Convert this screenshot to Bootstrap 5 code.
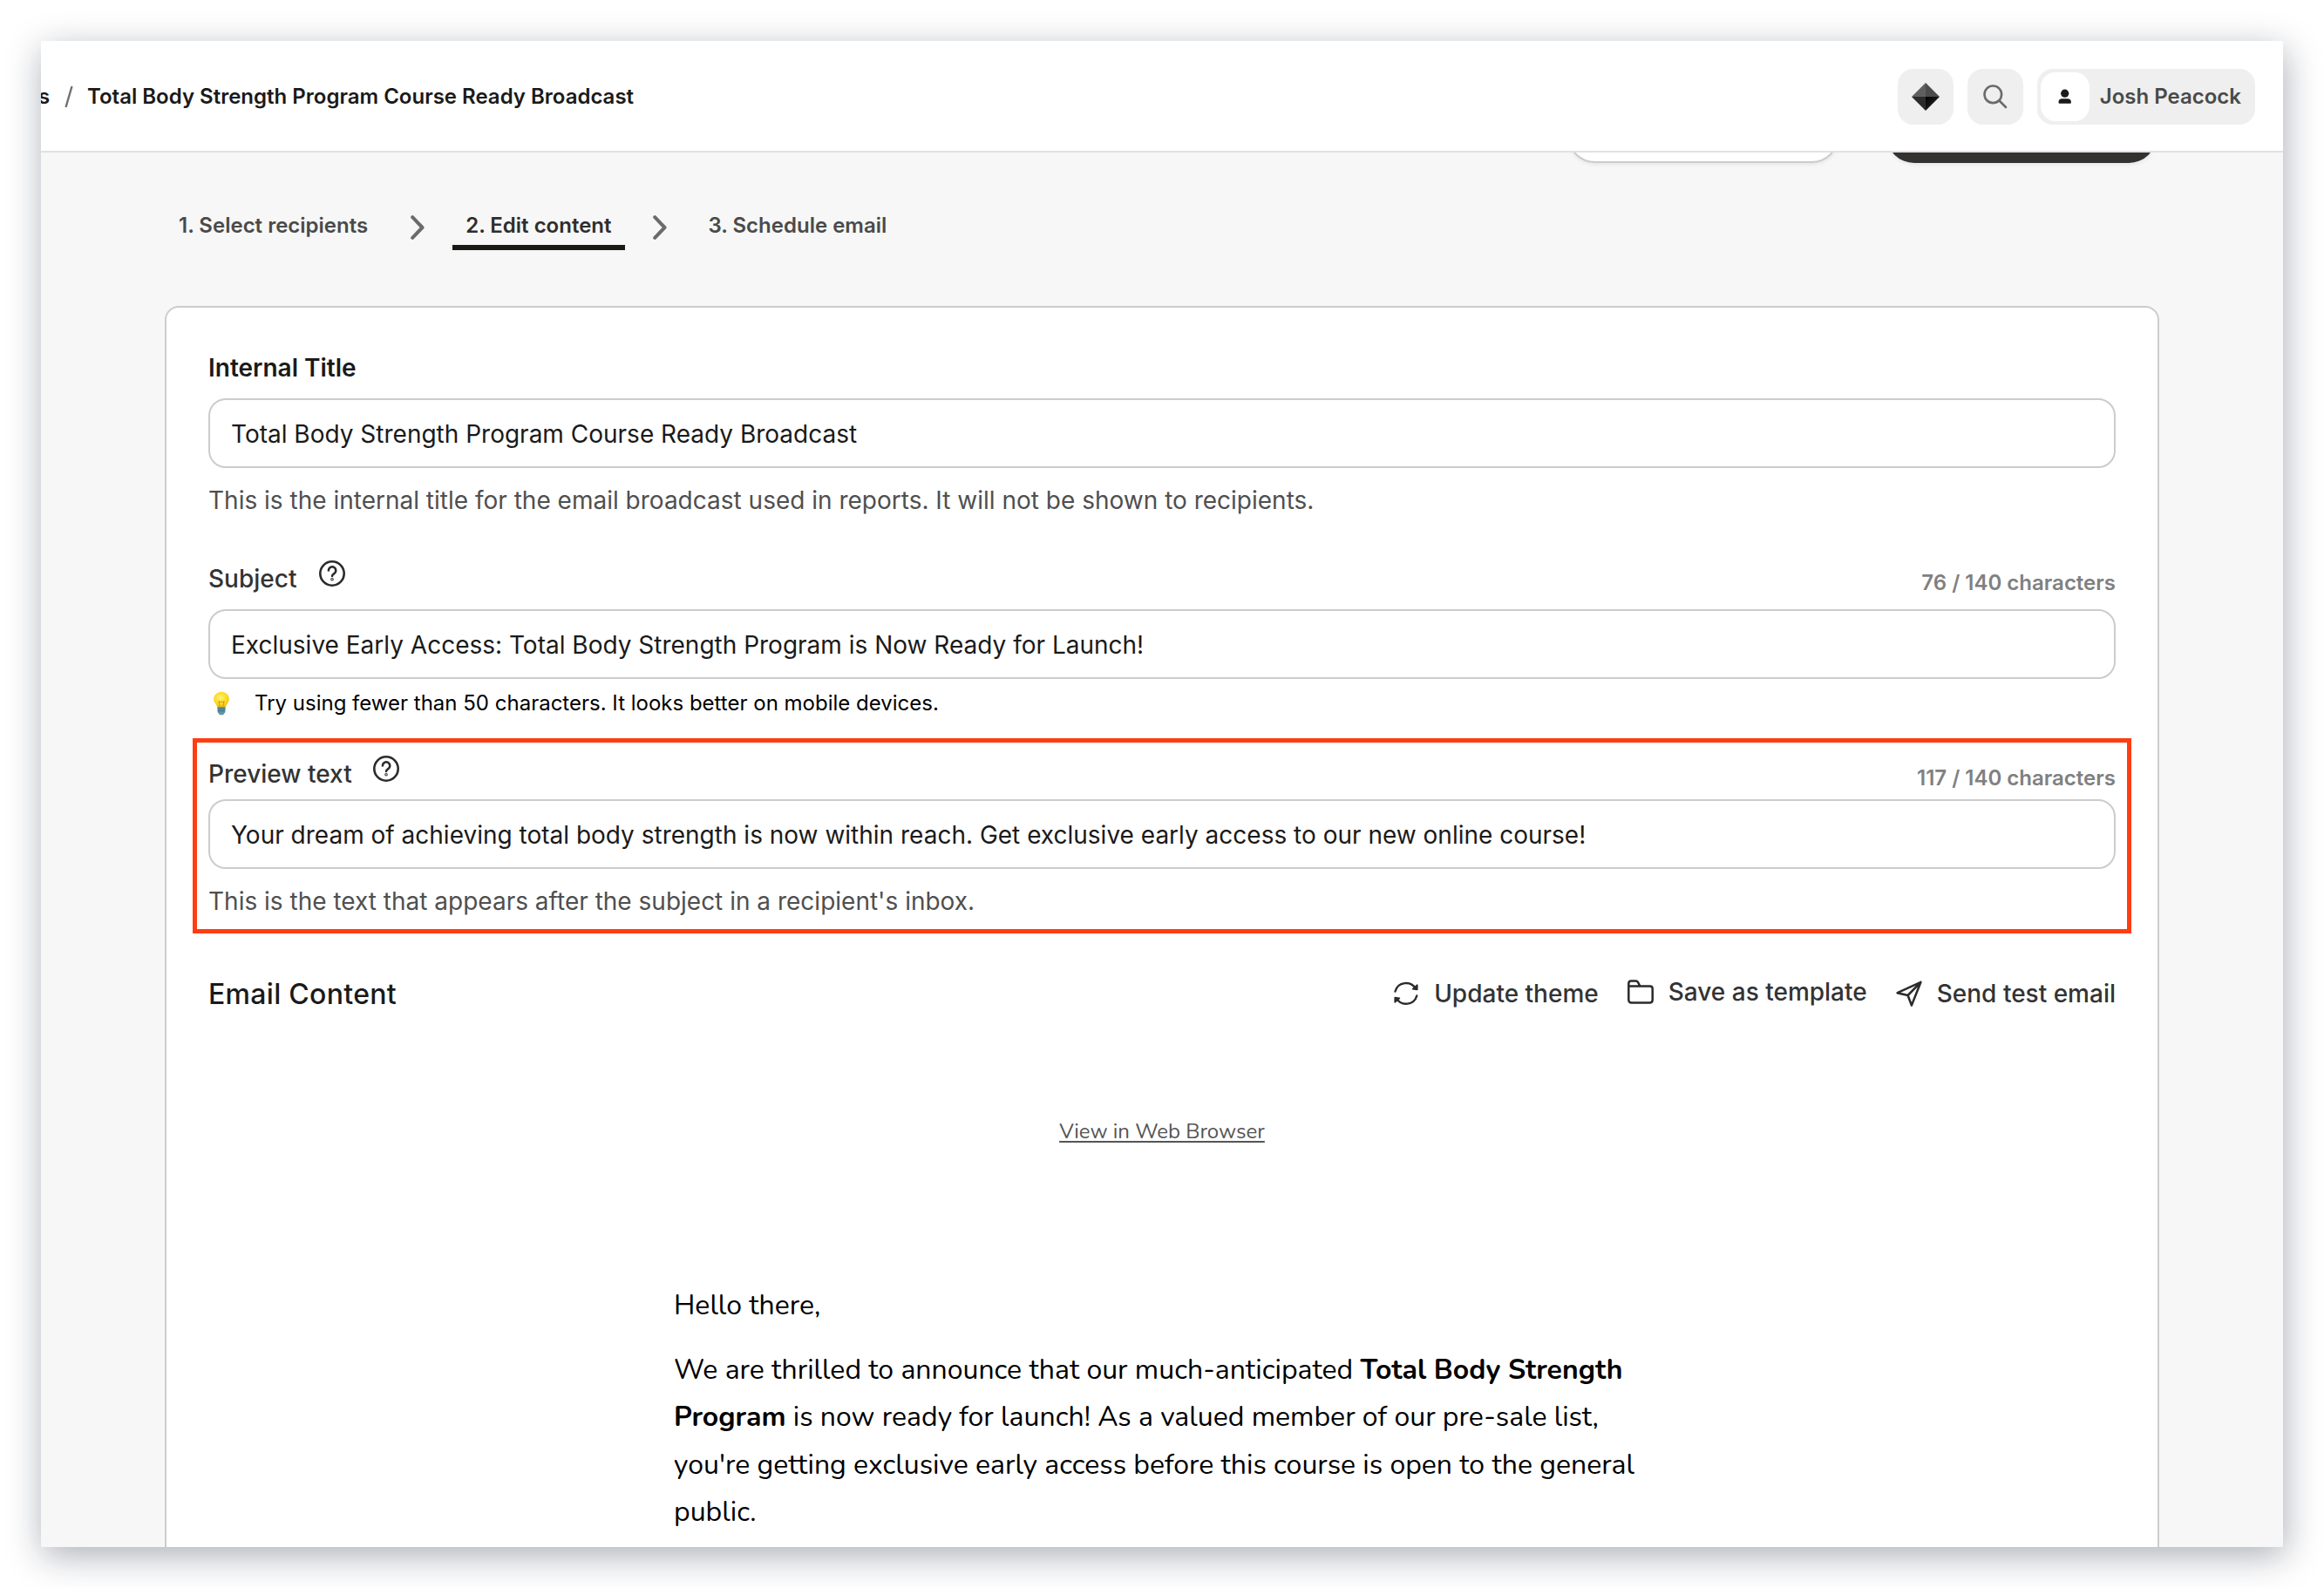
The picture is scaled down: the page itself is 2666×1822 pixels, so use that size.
<!DOCTYPE html>
<html lang="en">
<head>
<meta charset="utf-8">
<meta name="viewport" content="width=device-width, initial-scale=1">
<title>Total Body Strength Program Course Ready Broadcast</title>
<link rel="stylesheet" href="https://cdn.jsdelivr.net/npm/bootstrap@5.3.0/dist/css/bootstrap.min.css">
<script src="https://cdn.jsdelivr.net/npm/bootstrap@5.3.0/dist/js/bootstrap.bundle.min.js"></script>
<style>
body{background:#fff;font-family:Inter,"Liberation Sans",sans-serif;font-size:28px;line-height:40px;color:#1a1a1a;height:1822px;overflow:hidden;padding:47px}
svg{display:block;flex:none}
.app-window{height:1728px;background:#f7f7f7;border-radius:2px;box-shadow:2px 10px 40px rgba(10,20,40,.34)}
.app-clip{height:100%;overflow:hidden;border-radius:2px}
/* top bar */
.topbar{height:128px;padding:2px 32px 0 0;background:#fff;border-bottom:2px solid #e1e1e1;z-index:2;font-size:24px;font-weight:600}
.crumb-prev{margin-left:-3px;width:14px}
.crumb-sep{margin:0 16px 0 16px}
.tile{width:64px;height:64px;border-radius:18px;background:#efefef}
.user-chip{height:64px;padding:4px 16px 4px 4px;border-radius:18px;background:#efefef;color:#4a4a4a}
.avatar{width:56px;height:56px;border-radius:17px;background:#fff;margin-right:12px}
/* page actions, scrolled under the top bar */
.actions{margin-top:-52px;padding-right:145px;gap:54px}
.pill{width:310px;height:64px;border-radius:32px;box-shadow:0 2px 4px rgba(0,0,0,.07)}
.pill-light{width:312px;background:#fff;border:2px solid #ccc}
.pill-dark{background:#333230}
/* wizard steps */
.steps{margin:56px 0 64px 142px;height:44px;font-size:24px;font-weight:600;line-height:32px;color:#4a4a4a}
.step{padding:0 16px;height:44px;white-space:nowrap}
.step.current{padding:0 15px;color:#2e2e2e;border-bottom:6px solid #1a1a17}
.step-arrow{margin:4px 32px 0 33px}
.current + .step-arrow{margin-left:32px}
/* editor card */
.editor{margin:0 142px;height:1500px;padding:49px 48px 48px;background:#fff;border:2px solid #ccc;border-radius:16px}
.field-title{font-weight:600;line-height:40px;margin-bottom:15px}
.field{height:80px;padding:2px 24px 0;background:#fff;border:2px solid #ccc;border-radius:20px;font-size:28px;color:#1a1a1a}
.field:focus{box-shadow:none}
.help{margin-top:17px;color:#4f4f4f}
.label-row{padding-top:8.5px}
.label-row .name{font-weight:500;color:#333}
.label-row svg{margin:-2px 0 0 25px}
.count{font-size:24px;font-weight:600;color:#808080;margin-top:5.5px}
.subject-row{height:64px;margin-top:41px}
.tip{margin-top:8px;font-size:24px;color:#000}
.tip svg{margin:0 28px 0 5px}
.highlight{height:224px;margin:20px -18px 0;padding:7px 13px 0;border:5px solid #ff3d12}
.highlight .label-row{height:58px}
.highlight .label-row svg{margin-left:23px}
.content-row{height:48px;margin-top:45px}
.content-row h2{font-size:32px;font-weight:500;letter-spacing:.3px;margin:1px 0 0;line-height:48px}
.tool{font-weight:500;color:#333}
.tool-save{margin-left:32px}
.tool-send{margin-left:32px}
/* message preview */
.mail{font-family:Nunito,Lato,sans-serif;color:#000}
.web-link{margin-top:114px;font-size:24px;color:#555;text-decoration:underline;text-decoration-thickness:2px;text-underline-offset:3px}
.mail-body{width:1120px;margin:152.5px auto 0;font-size:32px;line-height:54.4px}
.mail-body p{margin-bottom:20px}
</style>
</head>
<body>
<div class="app-window">
 <div class="app-clip">
  <header class="topbar d-flex align-items-center position-relative">
   <div class="d-flex align-items-center me-auto">
    <span class="crumb-prev">s</span>
    <svg class="crumb-sep" width="10" height="26" viewBox="0 0 10 26" fill="none" stroke="#707070" stroke-width="2.400"><path d="M8.500 1 1.500 25"/></svg>
    <span>Total Body Strength Program Course Ready Broadcast</span>
   </div>
   <div class="d-flex gap-3">
    <div class="tile d-flex align-items-center justify-content-center">
     <svg width="32" height="32" viewBox="0 0 32 32">
      <defs>
       <linearGradient id="gemRight" x1="0" y1="0" x2="1" y2="1"><stop offset="0" stop-color="#000"/><stop offset="1" stop-color="#333"/></linearGradient>
      </defs>
      <path d="M16 0 0 16h16z" fill="#5f5f5f"/><path d="M16 0l16 16H16z" fill="#4c4c4c"/>
      <path d="M0 16h16v16z" fill="#2b2b2b"/><path d="M32 16H16v16z" fill="url(#gemRight)"/>
     </svg>
    </div>
    <div class="tile d-flex align-items-center justify-content-center">
     <svg width="32" height="32" viewBox="0 0 32 32" fill="none" stroke="#6b6b6b" stroke-width="2.600" stroke-linecap="round"><circle cx="13.300" cy="13.300" r="9.800"/><path d="M20.500 20.500 28 28"/></svg>
    </div>
    <div class="user-chip d-flex align-items-center">
     <span class="avatar d-flex align-items-center justify-content-center">
      <svg width="20" height="20" viewBox="0 0 20 20" fill="#1a1a1a"><circle cx="9.700" cy="6.200" r="4.600"/><path d="M2.500 16.200c0-2.700 1.500-4 4-4h6.400c2.500 0 4 1.300 4 4 0 1-.5 1.500-1.400 1.500H3.900c-.9 0-1.400-.5-1.400-1.500z"/></svg>
     </span>
     <span>Josh Peacock</span>
    </div>
   </div>
  </header>

  <div class="actions d-flex justify-content-end">
   <div class="pill pill-light"></div>
   <div class="pill pill-dark"></div>
  </div>

  <nav class="steps d-flex align-items-start">
   <div class="step">1. Select recipients</div>
   <svg class="step-arrow" width="16" height="28" viewBox="0 0 16 28" fill="none" stroke="#6b6b6b" stroke-width="4" stroke-linecap="round" stroke-linejoin="round"><path d="M2.200 2.200 13.500 14 2.200 25.800"/></svg>
   <div class="step current">2. Edit content</div>
   <svg class="step-arrow" width="16" height="28" viewBox="0 0 16 28" fill="none" stroke="#6b6b6b" stroke-width="4" stroke-linecap="round" stroke-linejoin="round"><path d="M2.200 2.200 13.500 14 2.200 25.800"/></svg>
   <div class="step">3. Schedule email</div>
  </nav>

  <main class="editor">
   <div class="field-title">Internal Title</div>
   <div class="field form-control d-flex align-items-center">Total Body Strength Program Course Ready Broadcast</div>
   <div class="help">This is the internal title for the email broadcast used in reports. It will not be shown to recipients.</div>

   <div class="label-row subject-row d-flex align-items-start">
    <span class="name">Subject</span>
    <svg width="32" height="32" viewBox="0 0 32 32" fill="none" stroke="#2b2b2b" stroke-width="2.600" stroke-linecap="round" stroke-linejoin="round"><circle cx="16" cy="16" r="13.700"/><path d="M11.900 12.500a4.200 4.200 0 1 1 6.400 3.600c-1.500.9-2.300 1.500-2.300 2.900"/><circle cx="16" cy="22.700" r=".5"/></svg>
    <span class="count ms-auto">76 / 140 characters</span>
   </div>
   <div class="field form-control d-flex align-items-center">Exclusive Early Access: Total Body Strength Program is Now Ready for Launch!</div>
   <div class="tip d-flex align-items-center">
    <svg width="20" height="28" viewBox="0 0 20 28">
     <defs><radialGradient id="bulb" cx=".45" cy=".4" r=".6"><stop offset="0" stop-color="#fff27a"/><stop offset=".7" stop-color="#fcd91c"/><stop offset="1" stop-color="#f2bd0c"/></radialGradient></defs>
     <path d="M10 .8c5 0 8.800 3.600 8.800 8.300 0 3.900-3 5.900-4.100 9.100H5.300C4.200 15 1.200 13 1.200 9.100 1.200 4.400 5 .8 10 .8z" fill="url(#bulb)"/>
     <path d="M8.300 17.500 6.900 11.500l2 1.400 1.100-1.300 1.100 1.300 2-1.400-1.400 6" fill="none" stroke="#c98a12" stroke-width=".9"/>
     <path d="M5.300 18h9.400l-.5 6.300-2.200 2.900H8l-2.200-2.900z" fill="#5f97a8"/>
     <path d="M5.500 20.200h9M5.700 22.600h8.600" stroke="#3c6878" stroke-width=".9"/>
    </svg>
    <span>Try using fewer than 50 characters. It looks better on mobile devices.</span>
   </div>

   <section class="highlight">
    <div class="label-row d-flex align-items-start">
     <span class="name">Preview text</span>
     <svg width="32" height="32" viewBox="0 0 32 32" fill="none" stroke="#2b2b2b" stroke-width="2.600" stroke-linecap="round" stroke-linejoin="round"><circle cx="16" cy="16" r="13.700"/><path d="M11.900 12.500a4.200 4.200 0 1 1 6.400 3.600c-1.500.9-2.300 1.500-2.300 2.900"/><circle cx="16" cy="22.700" r=".5"/></svg>
     <span class="count ms-auto">117 / 140 characters</span>
    </div>
    <div class="field form-control d-flex align-items-center">Your dream of achieving total body strength is now within reach. Get exclusive early access to our new online course!</div>
    <div class="help">This is the text that appears after the subject in a recipient's inbox.</div>
   </section>

   <div class="content-row d-flex align-items-center">
    <h2 class="me-auto">Email Content</h2>
    <div class="tool d-flex align-items-center">
     <svg width="32" height="32" viewBox="0 0 32 32" fill="none" stroke="#2b2b2b" stroke-width="2.400" stroke-linecap="round" stroke-linejoin="round"><path d="M3.500 13.500A12.800 12.800 0 0 1 27 10.500M28.300 18.500A12.800 12.800 0 0 1 5 21.500"/><path d="M28.800 6.200v5.300l-5.200-.7z" fill="#2b2b2b" stroke-width="1.600"/><path d="M3.200 25.900v-5.300l5.200.7z" fill="#2b2b2b" stroke-width="1.600"/></svg>
     <span class="ms-3">Update theme</span>
    </div>
    <div class="tool tool-save d-flex align-items-center mb-1">
     <svg width="32" height="32" viewBox="0 0 32 32" fill="none" stroke="#2b2b2b" stroke-width="2.500" stroke-linecap="round" stroke-linejoin="round"><path d="M2.300 9.800V6.600c0-1.800 1.200-3 3-3h5.200c1.200 0 2 .5 2.600 1.500l2.200 4.200M2.300 9.500h24.400c2 0 3 1.200 3 3v12.800c0 2-1.200 3.200-3.200 3.200h-21c-2 0-3.200-1.200-3.200-3.200z"/></svg>
     <span class="ms-3">Save as template</span>
    </div>
    <div class="tool tool-send d-flex align-items-center">
     <svg width="32" height="32" viewBox="0 0 32 32" fill="none" stroke="#2b2b2b" stroke-width="2.500" stroke-linecap="round" stroke-linejoin="round"><path d="M29.500 2.800 2.600 15.200l12 2.800 4.300 11.500zM29.500 2.800 14.600 18"/></svg>
     <span class="ms-3">Send test email</span>
    </div>
   </div>

   <div class="mail">
    <div class="text-center"><a class="web-link d-inline-block">View in Web Browser</a></div>
    <div class="mail-body">
     <p>Hello there,</p>
     <p>We are thrilled to announce that our much-anticipated <strong>Total Body Strength Program</strong> is now ready for launch! As a valued member of our pre-sale list, you're getting exclusive early access before this course is open to the general public.</p>
    </div>
   </div>
  </main>
 </div>
</div>
</body>
</html>
